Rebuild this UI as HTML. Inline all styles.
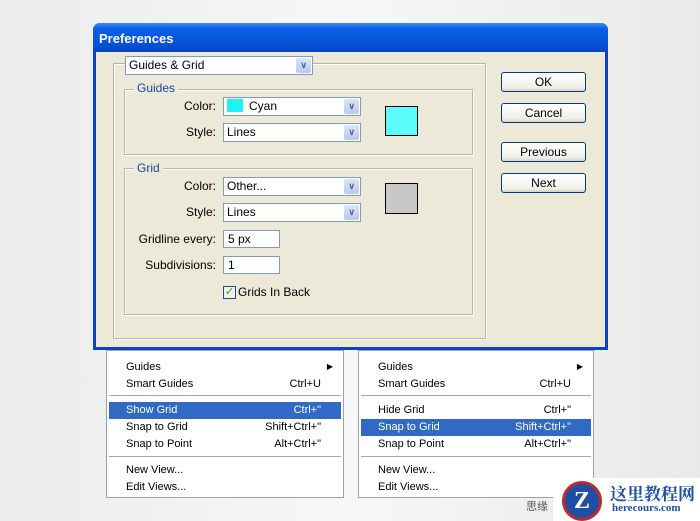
<!DOCTYPE html>
<html><head><meta charset="utf-8"><style>
*{margin:0;padding:0;box-sizing:border-box}
body{width:700px;height:521px;position:relative;overflow:hidden;background:linear-gradient(90deg,#ececec,#f7f7f7 50%,#e9e9e9);font-family:Tahoma,"Liberation Sans",sans-serif;font-size:11.5px;color:#000}
.a{position:absolute}
.win{left:93px;top:23px;width:515px;height:327px;background:#ece9d8;border:3px solid #0843c8;border-top:none;border-radius:7px 7px 0 0}
.title{left:93px;top:23px;width:515px;height:29px;border-radius:7px 7px 0 0;background:linear-gradient(#3d8bf4,#0a5fe6 20%,#0653d8 70%,#0845c4);color:#fff;font-weight:bold;font-size:13px;padding:8px 0 0 6px}
.grp{border:1px solid #b8b5a6;box-shadow:1px 1px 0 #fff inset,1px 1px 0 #fff}
.lg{background:#ece9d8;color:#1c3fa8;padding:0 3px;font-size:12px}
.dd{background:#fff;border:1px solid #7f9db9;height:19px;padding:1px 3px;font-size:12px}
.dd::after{content:"";position:absolute;right:1px;top:1px;width:15px;height:15px;background:linear-gradient(#dbe5fa,#b7c9f0);border-radius:2px}
.dd i{position:absolute;right:5px;top:3px;z-index:2;font-style:normal;color:#4d6185;font-size:9px;font-weight:bold}
.lbl{text-align:right;font-size:12px}
.inp{background:#fff;border:1px solid #7f9db9;height:18px;padding:1px 4px;font-size:12px}
.btn{left:501px;width:85px;height:20px;border:1px solid #003c74;border-radius:3px;background:linear-gradient(#fff,#f0f0ea 80%,#d6d0c5);text-align:center;font-size:12px;line-height:18px}
.menu{background:#fff;border:1px solid #a0a0a0;top:350px;height:148px}
.it{position:absolute;left:2px;right:2px;height:17px;padding:2px 0 0 17px;font-size:11px}
.it span{position:absolute;right:20px;top:2px}
.hl{background:#316ac5;color:#fff}
.sep{position:absolute;left:2px;right:2px;height:1px;background:#aca899}
</style></head><body>
<div class="a win"></div>
<div class="a title">Preferences</div>
<div class="a grp" style="left:113px;top:63px;width:373px;height:276px"></div>
<div class="a dd" style="left:125px;top:56px;width:188px">Guides &amp; Grid<i>&#8744;</i></div>
<div class="a grp" style="left:124px;top:89px;width:349px;height:66px"></div>
<div class="a lg" style="left:134px;top:81px">Guides</div>
<div class="a lbl" style="left:140px;top:99px;width:76px">Color:</div>
<div class="a dd" style="left:223px;top:97px;width:138px"><b style="display:inline-block;width:16px;height:13px;background:#1ef3f3;vertical-align:-2px;margin-right:6px"></b>Cyan<i>&#8744;</i></div>
<div class="a lbl" style="left:140px;top:125px;width:76px">Style:</div>
<div class="a dd" style="left:223px;top:123px;width:138px">Lines<i>&#8744;</i></div>
<div class="a" style="left:385px;top:106px;width:33px;height:30px;background:#5bfcfc;border:1px solid #000"></div>
<div class="a grp" style="left:124px;top:168px;width:349px;height:147px"></div>
<div class="a lg" style="left:134px;top:161px">Grid</div>
<div class="a lbl" style="left:140px;top:179px;width:76px">Color:</div>
<div class="a dd" style="left:223px;top:177px;width:138px">Other...<i>&#8744;</i></div>
<div class="a lbl" style="left:140px;top:205px;width:76px">Style:</div>
<div class="a dd" style="left:223px;top:203px;width:138px">Lines<i>&#8744;</i></div>
<div class="a" style="left:385px;top:183px;width:33px;height:31px;background:#c8c8c8;border:1px solid #000"></div>
<div class="a lbl" style="left:120px;top:232px;width:96px">Gridline every:</div>
<div class="a inp" style="left:223px;top:230px;width:57px">5 px</div>
<div class="a lbl" style="left:120px;top:258px;width:96px">Subdivisions:</div>
<div class="a inp" style="left:223px;top:256px;width:57px">1</div>
<div class="a" style="left:223px;top:286px;width:13px;height:13px;border:1px solid #1c5180;background:#f0f0ea;color:#21a121;font-size:11px;line-height:11px;text-align:center">&#10003;</div>
<div class="a" style="left:238px;top:285px;font-size:12px">Grids In Back</div>
<div class="a btn" style="top:72px">OK</div>
<div class="a btn" style="top:103px">Cancel</div>
<div class="a btn" style="top:142px">Previous</div>
<div class="a btn" style="top:173px">Next</div>

<div class="a menu" style="left:106px;width:238px">
<div class="it" style="top:8px">Guides<span style="right:8px;font-size:8px;top:3px">&#9654;</span></div>
<div class="it" style="top:25px">Smart Guides<span>Ctrl+U</span></div>
<div class="sep" style="top:44px"></div>
<div class="it hl" style="top:51px">Show Grid<span>Ctrl+"</span></div>
<div class="it" style="top:68px">Snap to Grid<span>Shift+Ctrl+"</span></div>
<div class="it" style="top:85px">Snap to Point<span>Alt+Ctrl+"</span></div>
<div class="sep" style="top:105px"></div>
<div class="it" style="top:111px">New View...</div>
<div class="it" style="top:128px">Edit Views...</div>
</div>
<div class="a menu" style="left:358px;width:236px">
<div class="it" style="top:8px">Guides<span style="right:8px;font-size:8px;top:3px">&#9654;</span></div>
<div class="it" style="top:25px">Smart Guides<span>Ctrl+U</span></div>
<div class="sep" style="top:44px"></div>
<div class="it" style="top:51px">Hide Grid<span>Ctrl+"</span></div>
<div class="it hl" style="top:68px">Snap to Grid<span>Shift+Ctrl+"</span></div>
<div class="it" style="top:85px">Snap to Point<span>Alt+Ctrl+"</span></div>
<div class="sep" style="top:105px"></div>
<div class="it" style="top:111px">New View...</div>
<div class="it" style="top:128px">Edit Views...</div>
</div>
<div class="a" style="left:526px;top:498px;font-size:11px;color:#555;font-family:'Liberation Sans','Noto Sans CJK SC',sans-serif">思缘</div>
<div class="a" style="left:553px;top:478px;width:147px;height:43px;background:#fff"></div>
<div class="a" style="left:562px;top:481px;width:40px;height:40px;border-radius:50%;background:#1e4fa3;border:3px solid #c0282d;color:#fff;font:bold 24px 'Liberation Serif',serif;text-align:center;line-height:34px">Z</div>
<div class="a" style="left:610px;top:480px;font:bold 17px 'Liberation Serif','Noto Serif CJK SC',serif;color:#1e4fa3">这里教程网</div>
<div class="a" style="left:612px;top:502px;font:bold 11px 'Liberation Serif',serif;color:#1e4fa3">herecours.com</div>
</body></html>
